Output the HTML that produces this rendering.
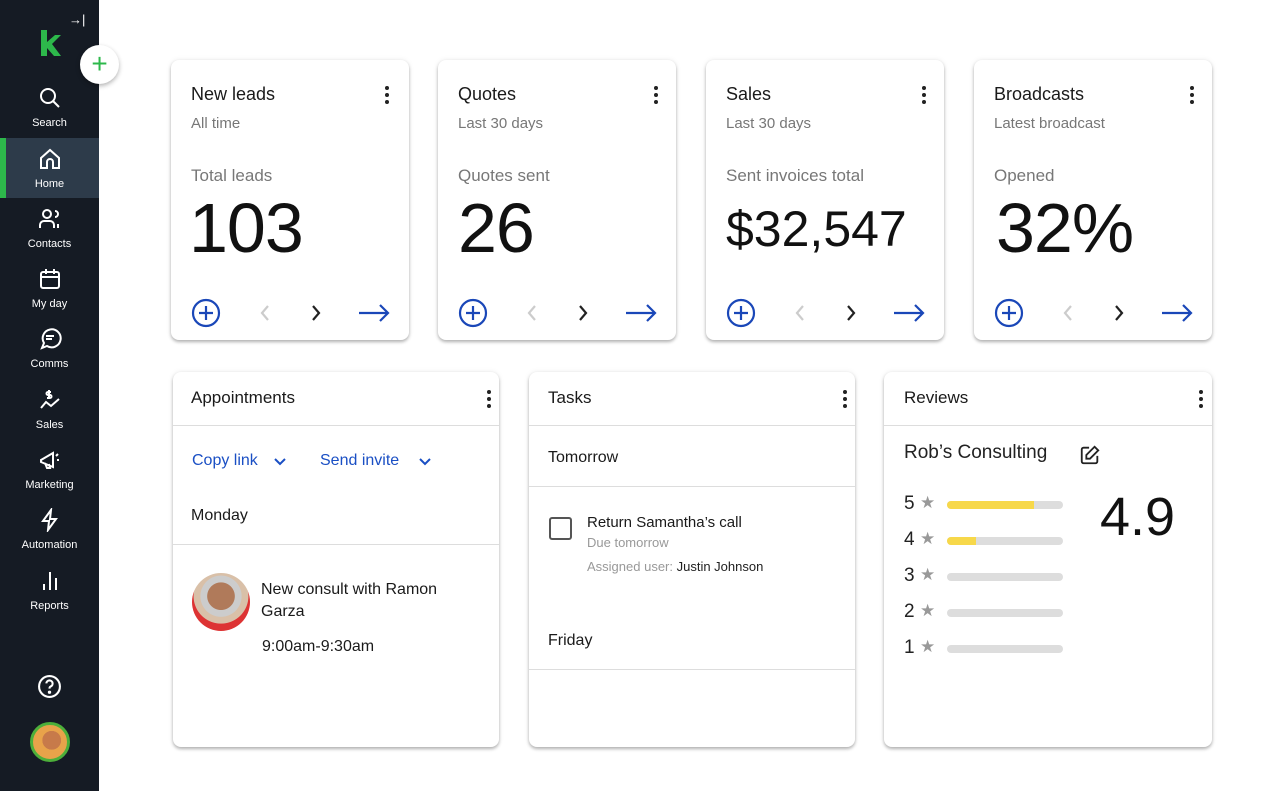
<!DOCTYPE html>
<html><head><style>
*{box-sizing:border-box;margin:0;padding:0}
body{width:1279px;height:791px;background:#fff;font-family:"Liberation Sans",sans-serif;position:relative;overflow:hidden;color:#1a1a1a}
.sb{position:absolute;left:0;top:0;width:99px;height:791px;background:#151b24}
.ni{position:absolute;left:0;width:99px;text-align:center;color:#fff;font-size:11px}
.ni svg{display:block;margin:0 auto 7px}
.card{position:absolute;background:#fff;border-radius:8px;box-shadow:0 2px 3px rgba(0,0,0,.28),0 0 6px rgba(0,0,0,.08)}
.t{position:absolute;font-size:18px;color:#1a1a1a}
.s{position:absolute;font-size:15px;color:#777}
.big{position:absolute;font-size:70px;color:#111;font-weight:300;letter-spacing:-1px}
.dots{position:absolute;width:4px}
.dots i{display:block;width:4px;height:4px;border-radius:2px;background:#222;margin-bottom:3px}
.hr{position:absolute;left:0;right:0;height:1px;background:#ddd}
.bar{position:absolute;left:63px;width:116px;height:8px;border-radius:4px;background:#ddd;overflow:hidden}
.bar b{display:block;height:8px;background:#f7d84a}
.rl{position:absolute;left:20px;font-size:19px;color:#222}
.st{position:absolute;left:36px;color:#999;font-size:17px}
</style></head><body>
<div class="sb">
 <div style="position:absolute;left:69px;top:12px;color:#fff;font-size:13px">→|</div>
 <svg style="position:absolute;left:39px;top:30px" width="22" height="26" viewBox="0 0 22 26"><path d="M2 0h6v12l8-7h6l-9 9 9 12h-7l-7-8v8H2z" fill="#2db84b"/></svg>
 <div style="position:absolute;left:80px;top:45px;width:39px;height:39px;border-radius:50%;background:#fff;box-shadow:0 2px 5px rgba(0,0,0,.3);text-align:center;line-height:37px;color:#2db84b;font-size:28px;font-weight:300">+</div>
 <div class="ni" style="top:86px"><svg width="24" height="24" viewBox="0 0 24 24" fill="none" stroke="#fff" stroke-width="2"><circle cx="10" cy="10" r="7"/><path d="M15 15l6 6"/></svg>Search</div>
 <div style="position:absolute;left:0;top:138px;width:99px;height:60px;background:#2d3b4a"></div>
 <div style="position:absolute;left:0;top:138px;width:6px;height:60px;background:#2db84b"></div>
 <div class="ni" style="top:147px"><svg width="24" height="24" viewBox="0 0 24 24" fill="none" stroke="#fff" stroke-width="2"><path d="M3 11l9-8 9 8v10h-6v-6a3 3 0 0 0-6 0v6H3z"/></svg>Home</div>
 <div class="ni" style="top:207px"><svg width="24" height="24" viewBox="0 0 24 24" fill="none" stroke="#fff" stroke-width="2"><circle cx="9" cy="7" r="4"/><path d="M2 21v-3a4 4 0 0 1 4-4h6a4 4 0 0 1 4 4v3M17 4a3 3 0 0 1 0 6M20 17v4"/></svg>Contacts</div>
 <div class="ni" style="top:267px"><svg width="24" height="24" viewBox="0 0 24 24" fill="none" stroke="#fff" stroke-width="2"><rect x="3" y="5" width="18" height="16" rx="2"/><path d="M3 10h18M8 2v5M16 2v5"/></svg>My day</div>
 <div class="ni" style="top:327px"><svg width="24" height="24" viewBox="0 0 24 24" fill="none" stroke="#fff" stroke-width="2"><path d="M4 21l2-5a9 9 0 1 1 3 3z"/><path d="M8 9h8M8 12h6"/></svg>Comms</div>
 <div class="ni" style="top:388px"><svg width="24" height="24" viewBox="0 0 24 24" fill="none" stroke="#fff" stroke-width="2"><path d="M3 20l5-6 5 4 8-7M11 2v8M13 4h-3a1.5 1.5 0 0 0 0 3h2a1.5 1.5 0 0 1 0 3H9"/></svg>Sales</div>
 <div class="ni" style="top:448px"><svg width="24" height="24" viewBox="0 0 24 24" fill="none" stroke="#fff" stroke-width="2"><path d="M3 12l12-7v14L3 14zM7 15l2 5h3l-1-4M18 8l2-2M19 12h2"/></svg>Marketing</div>
 <div class="ni" style="top:508px"><svg width="24" height="24" viewBox="0 0 24 24" fill="none" stroke="#fff" stroke-width="2"><path d="M13 2L5 13h6l-1 9 8-11h-6z"/></svg>Automation</div>
 <div class="ni" style="top:569px"><svg width="24" height="24" viewBox="0 0 24 24" fill="none" stroke="#fff" stroke-width="2"><path d="M6 21v-6M12 21V3M18 21v-12"/></svg>Reports</div>
 <svg style="position:absolute;left:37px;top:674px" width="25" height="25" viewBox="0 0 24 24" fill="none" stroke="#fff" stroke-width="2"><circle cx="12" cy="12" r="10"/><path d="M9 9a3 3 0 1 1 4 3c-1 .5-1 1-1 2"/><circle cx="12" cy="17.5" r=".6" fill="#fff"/></svg>
 <div style="position:absolute;left:30px;top:722px;width:40px;height:40px;border-radius:50%;background:radial-gradient(circle at 55% 45%,#c77a4a 0 35%,#e8a34a 36%);border:3px solid #4caf3a"></div>
</div>

<!-- top cards -->
<div class="card" style="left:171px;top:60px;width:238px;height:280px">
 <div class="t" style="left:20px;top:24px">New leads</div><div class="dots" style="left:214px;top:26px"><i></i><i></i><i></i></div>
 <div class="s" style="left:20px;top:55px">All time</div>
 <div class="s" style="left:20px;top:106px;font-size:17px">Total leads</div>
 <div class="big" style="left:18px;top:128px">103</div>
 <svg style="position:absolute;left:20px;top:238px" width="220" height="30" viewBox="0 0 220 30" fill="none" stroke-width="2.2"><circle cx="15" cy="15" r="13" stroke="#1a47b8"/><path d="M15 8v14M8 15h14" stroke="#1a47b8"/><path d="M77 8l-6 7 6 7" stroke="#ccc"/><path d="M122 8l6 7-6 7" stroke="#222"/><path d="M168 15h29M189 7l8 8-8 8" stroke="#1a47b8"/></svg>
</div>
<div class="card" style="left:438px;top:60px;width:238px;height:280px">
 <div class="t" style="left:20px;top:24px">Quotes</div><div class="dots" style="left:216px;top:26px"><i></i><i></i><i></i></div>
 <div class="s" style="left:20px;top:55px">Last 30 days</div>
 <div class="s" style="left:20px;top:106px;font-size:17px">Quotes sent</div>
 <div class="big" style="left:20px;top:128px">26</div>
 <svg style="position:absolute;left:20px;top:238px" width="220" height="30" viewBox="0 0 220 30" fill="none" stroke-width="2.2"><circle cx="15" cy="15" r="13" stroke="#1a47b8"/><path d="M15 8v14M8 15h14" stroke="#1a47b8"/><path d="M77 8l-6 7 6 7" stroke="#ccc"/><path d="M122 8l6 7-6 7" stroke="#222"/><path d="M168 15h29M189 7l8 8-8 8" stroke="#1a47b8"/></svg>
</div>
<div class="card" style="left:706px;top:60px;width:238px;height:280px">
 <div class="t" style="left:20px;top:24px">Sales</div><div class="dots" style="left:216px;top:26px"><i></i><i></i><i></i></div>
 <div class="s" style="left:20px;top:55px">Last 30 days</div>
 <div class="s" style="left:20px;top:106px;font-size:17px">Sent invoices total</div>
 <div class="big" style="left:20px;top:140px;font-size:50px;letter-spacing:0">$32,547</div>
 <svg style="position:absolute;left:20px;top:238px" width="220" height="30" viewBox="0 0 220 30" fill="none" stroke-width="2.2"><circle cx="15" cy="15" r="13" stroke="#1a47b8"/><path d="M15 8v14M8 15h14" stroke="#1a47b8"/><path d="M77 8l-6 7 6 7" stroke="#ccc"/><path d="M122 8l6 7-6 7" stroke="#222"/><path d="M168 15h29M189 7l8 8-8 8" stroke="#1a47b8"/></svg>
</div>
<div class="card" style="left:974px;top:60px;width:238px;height:280px">
 <div class="t" style="left:20px;top:24px">Broadcasts</div><div class="dots" style="left:216px;top:26px"><i></i><i></i><i></i></div>
 <div class="s" style="left:20px;top:55px">Latest broadcast</div>
 <div class="s" style="left:20px;top:106px;font-size:17px">Opened</div>
 <div class="big" style="left:22px;top:128px">32%</div>
 <svg style="position:absolute;left:20px;top:238px" width="220" height="30" viewBox="0 0 220 30" fill="none" stroke-width="2.2"><circle cx="15" cy="15" r="13" stroke="#1a47b8"/><path d="M15 8v14M8 15h14" stroke="#1a47b8"/><path d="M77 8l-6 7 6 7" stroke="#ccc"/><path d="M122 8l6 7-6 7" stroke="#222"/><path d="M168 15h29M189 7l8 8-8 8" stroke="#1a47b8"/></svg>
</div>

<!-- Appointments -->
<div class="card" style="left:173px;top:372px;width:326px;height:375px">
 <div class="t" style="left:18px;top:16px;font-size:17px">Appointments</div><div class="dots" style="left:314px;top:18px"><i></i><i></i><i></i></div>
 <div class="hr" style="top:53px"></div>
 <div style="position:absolute;left:19px;top:80px;color:#1a4fc4;font-size:16px">Copy link</div>
 <svg style="position:absolute;left:101px;top:86px" width="12" height="8" viewBox="0 0 12 8" fill="none" stroke="#1a4fc4" stroke-width="2"><path d="M1 1l5 5 5-5"/></svg>
 <div style="position:absolute;left:147px;top:80px;color:#1a4fc4;font-size:16px">Send invite</div>
 <svg style="position:absolute;left:246px;top:86px" width="12" height="8" viewBox="0 0 12 8" fill="none" stroke="#1a4fc4" stroke-width="2"><path d="M1 1l5 5 5-5"/></svg>
 <div class="t" style="left:18px;top:135px;font-size:16px">Monday</div>
 <div class="hr" style="top:172px"></div>
 <div style="position:absolute;left:19px;top:201px;width:58px;height:58px;border-radius:50%;background:radial-gradient(circle at 50% 40%,#b07a5a 0 30%,#ccc 31% 45%,#d9c0a8 46% 60%,#d33 61%)"></div>
 <div style="position:absolute;left:88px;top:207px;font-size:16px;line-height:22px;width:210px">New consult with Ramon Garza</div>
 <div style="position:absolute;left:89px;top:266px;font-size:16px">9:00am-9:30am</div>
</div>

<!-- Tasks -->
<div class="card" style="left:529px;top:372px;width:326px;height:375px">
 <div class="t" style="left:19px;top:16px;font-size:17px">Tasks</div><div class="dots" style="left:314px;top:18px"><i></i><i></i><i></i></div>
 <div class="hr" style="top:53px"></div>
 <div class="t" style="left:19px;top:77px;font-size:16px">Tomorrow</div>
 <div class="hr" style="top:114px"></div>
 <div style="position:absolute;left:20px;top:145px;width:23px;height:23px;border:2px solid #555;border-radius:3px"></div>
 <div style="position:absolute;left:58px;top:142px;font-size:15px">Return Samantha’s call</div>
 <div style="position:absolute;left:58px;top:163px;font-size:13px;color:#999">Due tomorrow</div>
 <div style="position:absolute;left:58px;top:187px;font-size:13px;color:#999">Assigned user: <span style="color:#222">Justin Johnson</span></div>
 <div class="t" style="left:19px;top:260px;font-size:16px">Friday</div>
 <div class="hr" style="top:297px"></div>
</div>

<!-- Reviews -->
<div class="card" style="left:884px;top:372px;width:328px;height:375px">
 <div class="t" style="left:20px;top:16px;font-size:17px">Reviews</div><div class="dots" style="left:315px;top:18px"><i></i><i></i><i></i></div>
 <div class="hr" style="top:53px"></div>
 <div style="position:absolute;left:20px;top:70px;font-size:19px;color:#222">Rob’s Consulting</div>
 <svg style="position:absolute;left:195px;top:72px" width="22" height="22" viewBox="0 0 24 24" fill="none" stroke="#222" stroke-width="2"><path d="M11 4H5a2 2 0 0 0-2 2v13a2 2 0 0 0 2 2h13a2 2 0 0 0 2-2v-6"/><path d="M17 3l4 4-9 9H8v-4z"/></svg>
 <div class="rl" style="top:121px">5</div><div class="st" style="top:121px">★</div><div class="bar" style="top:129px"><b style="width:75%"></b></div>
 <div class="rl" style="top:157px">4</div><div class="st" style="top:157px">★</div><div class="bar" style="top:165px"><b style="width:25%"></b></div>
 <div class="rl" style="top:193px">3</div><div class="st" style="top:193px">★</div><div class="bar" style="top:201px"></div>
 <div class="rl" style="top:229px">2</div><div class="st" style="top:229px">★</div><div class="bar" style="top:237px"></div>
 <div class="rl" style="top:265px">1</div><div class="st" style="top:265px">★</div><div class="bar" style="top:273px"></div>
 <div style="position:absolute;left:216px;top:114px;font-size:54px;font-weight:300;color:#111">4.9</div>
</div>
</body></html>
